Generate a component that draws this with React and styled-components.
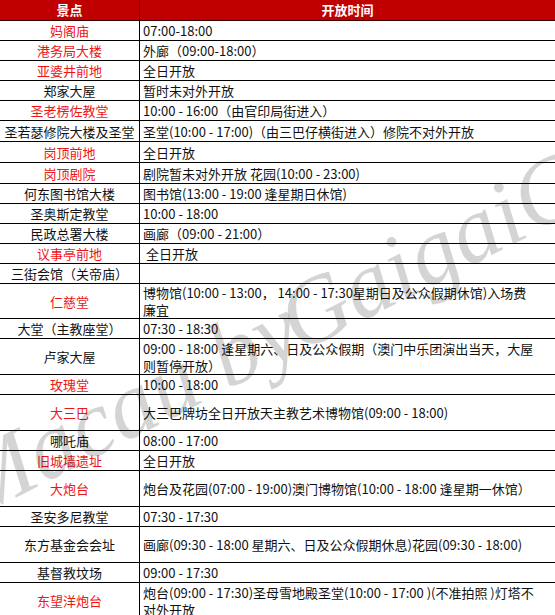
import React from 'react';
import styled, { createGlobalStyle } from 'styled-components';

const GlobalStyle = createGlobalStyle`
  html, body {
    margin: 0;
    padding: 0;
    background: #fff;
  }
  body {
    font-family: "Noto Sans CJK SC", "Noto Sans", sans-serif;
  }
`;

const Sheet = styled.div`
  position: relative;
  width: 555px;
  height: 615px;
  overflow: hidden;
  background: #fff;
  font-size: 13px;
  color: #111;
`;

const HeadRow = styled.div`
  display: grid;
  grid-template-columns: 140px 1fr;
  height: 20px;
  background: #c00000;
  border-top: 1px solid #d9737a;
  border-bottom: 1px solid #3a0000;
  box-sizing: content-box;
  margin-top: -1px;
`;

const HeadCell = styled.div`
  display: flex;
  align-items: center;
  justify-content: center;
  color: #fff;
  font-weight: 700;
  font-size: 13px;
  line-height: 20px;
  border-right: ${p => (p.$last ? 'none' : '1px solid #6d0000')};
`;

const Row = styled.div`
  display: grid;
  grid-template-columns: 140px 1fr;
  height: ${p => p.$h - 1}px;
  border-bottom: 1px solid #000;
`;

const NameCell = styled.div`
  display: flex;
  align-items: center;
  justify-content: center;
  border-right: 1px solid #000;
  color: ${p => (p.$red ? '#ee1515' : '#111')};
  line-height: 17px;
  white-space: nowrap;
`;

const TimeCell = styled.div`
  display: flex;
  align-items: center;
  padding-left: 3px;
  line-height: 17px;
  white-space: pre;
`;

// diagonal signature laid over the table
const Watermark = styled.div`
  position: absolute;
  left: -26px;
  top: 440px;
  font-family: "Liberation Serif", "DejaVu Serif", serif;
  font-style: italic;
  font-size: 94px;
  line-height: 94px;
  white-space: nowrap;
  color: rgba(0, 0, 0, 0.17);
  transform-origin: 0 79px;
  transform: rotate(-27deg);
  pointer-events: none;
`;

const Signature = styled.span`
  margin-left: -32px;
`;

const rows = [
  ['妈阁庙', true, 20, '07:00-18:00'],
  ['港务局大楼', true, 20, '外廊（09:00-18:00）'],
  ['亚婆井前地', true, 20, '全日开放'],
  ['郑家大屋', false, 20, '暂时未对外开放'],
  ['圣老楞佐教堂', true, 20, '10:00 - 16:00（由官印局街进入）'],
  ['圣若瑟修院大楼及圣堂', false, 21, '圣堂(10:00 - 17:00)（由三巴仔横街进入）修院不对外开放'],
  ['岗顶前地', true, 21, '全日开放'],
  ['岗顶剧院', true, 21, '剧院暂未对外开放 花园(10:00 - 23:00)'],
  ['何东图书馆大楼', false, 20, '图书馆(13:00 - 19:00 逢星期日休馆)'],
  ['圣奥斯定教堂', false, 20, '10:00 - 18:00'],
  ['民政总署大楼', false, 20, '画廊（09:00 - 21:00）'],
  ['议事亭前地', true, 20, ' 全日开放'],
  ['三街会馆（关帝庙）', false, 20, ''],
  ['仁慈堂', true, 35, '博物馆(10:00 - 13:00， 14:00 - 17:30星期日及公众假期休馆)入场费\n廉宜'],
  ['大堂（主教座堂）', false, 20, '07:30 - 18:30'],
  ['卢家大屋', false, 36, '09:00 - 18:00 逢星期六、日及公众假期（澳门中乐团演出当天，大屋\n则暂停开放）'],
  ['玫瑰堂', true, 20, '10:00 - 18:00'],
  ['大三巴', true, 36, '大三巴牌坊全日开放天主教艺术博物馆(09:00 - 18:00)'],
  ['哪吒庙', false, 20, '08:00 - 17:00'],
  ['旧城墙遗址', true, 20, '全日开放'],
  ['大炮台', true, 36, '炮台及花园(07:00 - 19:00)澳门博物馆(10:00 - 18:00 逢星期一休馆）'],
  ['圣安多尼教堂', false, 20, '07:30 - 17:30'],
  ['东方基金会会址', false, 36, '画廊(09:30 - 18:00 星期六、日及公众假期休息)花园(09:30 - 18:00)'],
  ['基督教坟场', false, 20, '09:00 - 17:30'],
  ['东望洋炮台', true, 36, '炮台(09:00 - 17:30)圣母雪地殿圣堂(10:00 - 17:00 )(不准拍照 )灯塔不\n对外开放'],
];

export default function App() {
  return (
    <>
      <GlobalStyle />
      <Sheet>
        <HeadRow>
          <HeadCell>景点</HeadCell>
          <HeadCell $last>开放时间</HeadCell>
        </HeadRow>
        {rows.map(([name, red, h, time]) => (
          <Row key={name} $h={h}>
            <NameCell $red={red}>{name}</NameCell>
            <TimeCell>{time}</TimeCell>
          </Row>
        ))}
        <Watermark>
          Macau by <Signature>GaigaiC</Signature>
        </Watermark>
      </Sheet>
    </>
  );
}
